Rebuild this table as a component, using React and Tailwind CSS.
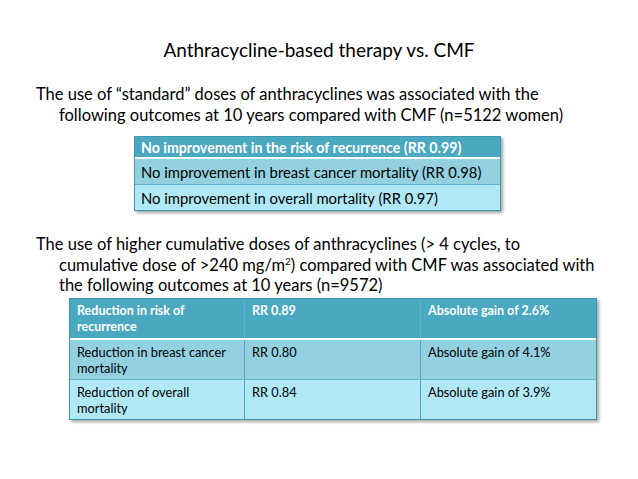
export default function App() {
  return (
    <div className="w-[638px] h-[479px] bg-white text-black font-['Lato','Open_Sans',sans-serif] overflow-hidden">
      <div className="pt-[38px] text-center text-[19px] leading-[24px]">
        Anthracycline-based therapy vs. CMF
      </div>
      <p className="mt-[22px] pl-[59px] -indent-[23px] pr-[10px] text-[16.5px] leading-[20.5px] whitespace-nowrap">
        The use of “standard” doses of anthracyclines was associated with the<br />
        following outcomes at 10 years compared with CMF (n=5122 women)
      </p>
      <div className="ml-[134px] mt-[11px] w-[367px] border border-[#3f97ad] shadow-[2px_2px_3px_rgba(0,0,0,0.35)] text-[14.8px] leading-[18px] whitespace-nowrap">
        <div className="h-[22px] pl-[6px] pt-[2px] bg-[#4aa8c0] text-white font-bold text-[14.2px] border-b-2 border-white">
          No improvement in the risk of recurrence (RR 0.99)
        </div>
        <div className="h-[26px] pl-[6px] pt-[4px] bg-[#93d1e1] border-b border-[#5fb6cc]">
          No improvement in breast cancer mortality (RR 0.98)
        </div>
        <div className="h-[25px] pl-[6px] pt-[4px] bg-[#b0e8f6]">
          No improvement in overall mortality (RR 0.97)
        </div>
      </div>
      <p className="mt-[23px] pl-[59px] -indent-[23px] pr-[10px] text-[16.5px] leading-[20.5px] whitespace-nowrap">
        The use of higher cumulative doses of anthracyclines (&gt; 4 cycles, to<br />
        cumulative dose of &gt;240 mg/m<span className="text-[10px] leading-none align-[6px]">2</span>) compared with CMF was associated with<br />
        the following outcomes at 10 years (n=9572)
      </p>
      <div className="ml-[69px] mt-[2px] w-[528px] border border-[#3f97ad] shadow-[2px_2px_3px_rgba(0,0,0,0.35)] text-[12.8px] leading-[16px] whitespace-nowrap">
        <div className="grid grid-cols-[175px_176px_1fr] h-[41px] bg-[#4aa8c0] text-white font-bold text-[12.5px] border-b-2 border-white">
          <div className="pl-[7px] pt-[4px] border-r border-[#5fb6cc]">Reduction in risk of<br />recurrence</div>
          <div className="pl-[7px] pt-[4px] border-r border-[#5fb6cc]">RR 0.89</div>
          <div className="pl-[7px] pt-[4px]">Absolute gain of 2.6%</div>
        </div>
        <div className="grid grid-cols-[175px_176px_1fr] h-[40px] bg-[#93d1e1] border-b border-[#5fb6cc]">
          <div className="pl-[7px] pt-[4px] border-r border-[#4aa8c0]">Reduction in breast cancer<br />mortality</div>
          <div className="pl-[7px] pt-[4px] border-r border-[#4aa8c0]">RR 0.80</div>
          <div className="pl-[7px] pt-[4px]">Absolute gain of 4.1%</div>
        </div>
        <div className="grid grid-cols-[175px_176px_1fr] h-[39px] bg-[#b0e8f6]">
          <div className="pl-[7px] pt-[4px] border-r border-[#4aa8c0]">Reduction of overall<br />mortality</div>
          <div className="pl-[7px] pt-[4px] border-r border-[#4aa8c0]">RR 0.84</div>
          <div className="pl-[7px] pt-[4px]">Absolute gain of 3.9%</div>
        </div>
      </div>
    </div>
  );
}
